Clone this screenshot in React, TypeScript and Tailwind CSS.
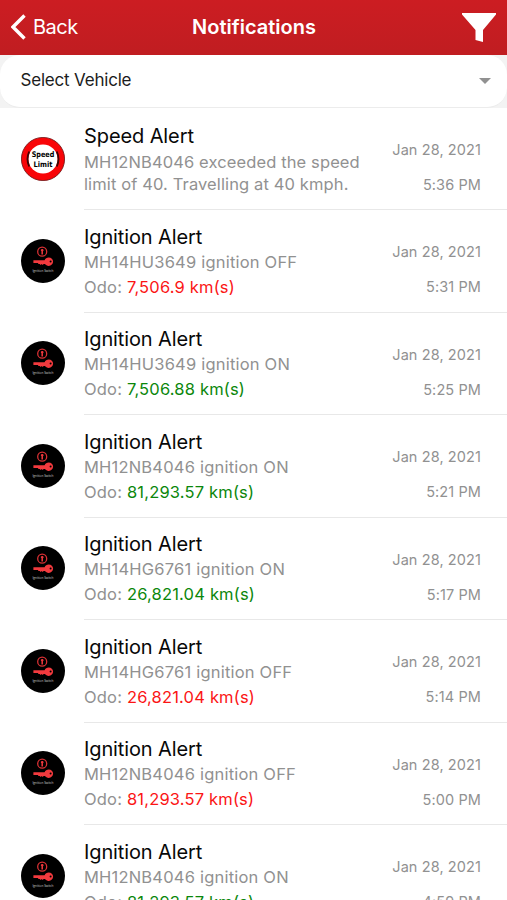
type Notification = {
  title: string
  vehicle: string
  state: 'ON' | 'OFF'
  odo: string
  date: string
  time: string
}

const ignitionAlerts: Notification[] = [
  { title: 'Ignition Alert', vehicle: 'MH14HU3649', state: 'OFF', odo: '7,506.9', date: 'Jan 28, 2021', time: '5:31 PM' },
  { title: 'Ignition Alert', vehicle: 'MH14HU3649', state: 'ON', odo: '7,506.88', date: 'Jan 28, 2021', time: '5:25 PM' },
  { title: 'Ignition Alert', vehicle: 'MH12NB4046', state: 'ON', odo: '81,293.57', date: 'Jan 28, 2021', time: '5:21 PM' },
  { title: 'Ignition Alert', vehicle: 'MH14HG6761', state: 'ON', odo: '26,821.04', date: 'Jan 28, 2021', time: '5:17 PM' },
  { title: 'Ignition Alert', vehicle: 'MH14HG6761', state: 'OFF', odo: '26,821.04', date: 'Jan 28, 2021', time: '5:14 PM' },
  { title: 'Ignition Alert', vehicle: 'MH12NB4046', state: 'OFF', odo: '81,293.57', date: 'Jan 28, 2021', time: '5:00 PM' },
  { title: 'Ignition Alert', vehicle: 'MH12NB4046', state: 'ON', odo: '81,293.57', date: 'Jan 28, 2021', time: '4:59 PM' },
]

function SpeedIcon() {
  return (
    <svg viewBox="0 0 44 44" className="h-11 w-11">
      <circle cx="22" cy="22" r="21.6" fill="#f80508" stroke="#6b1010" strokeWidth="0.8" />
      <circle cx="22" cy="22" r="14.6" fill="#fff" />
      <path d="M8.2 14.5q-3.4 7.5 0 15M35.8 14.5q3.4 7.5 0 15" fill="none" stroke="#3d0505" strokeWidth="1.8" />
      <text x="22" y="19.8" textAnchor="middle" textLength="22.5" lengthAdjust="spacingAndGlyphs" fontSize="7.8" fontWeight="700" fontFamily="DejaVu Sans, sans-serif">Speed</text>
      <text x="22" y="29.8" textAnchor="middle" textLength="19" lengthAdjust="spacingAndGlyphs" fontSize="7.6" fontWeight="700" fontFamily="DejaVu Sans, sans-serif">Limit</text>
    </svg>
  )
}

function IgnitionIcon() {
  return (
    <svg viewBox="0 0 44 44" className="h-11 w-11">
      <circle cx="22" cy="22" r="22" fill="#000" />
      <circle cx="21.2" cy="12.7" r="4.5" fill="none" stroke="#d93034" strokeWidth="1.3" />
      <path d="M21.2 10v5.4M19.9 11.3h2.6" stroke="#e8363a" strokeWidth="1.6" />
      <path
        fillRule="evenodd"
        fill="#f23a3e"
        d="M12.4 21.2h11.2c.7-1.8 2.3-2.8 4.1-2.8 2.5 0 4.4 1.8 4.4 4.2s-1.9 4.3-4.4 4.3c-1.6 0-2.9-.7-3.7-1.8h-1.4l-.9.8-1-.8-1 .8-.9-.8h-1.6v-1h-4.8zM29.6 21.6a1 1 0 1 0 0 2 1 1 0 0 0 0-2z"
      />
      <text x="22" y="33" textAnchor="middle" textLength="21" lengthAdjust="spacingAndGlyphs" fontSize="3.6" fill="#cfcfcf" fontFamily="Open Sans, sans-serif">Ignition Switch</text>
    </svg>
  )
}

function Stamp({ date, time }: { date: string; time: string }) {
  return (
    <div className="shrink-0 pt-[24px] pr-[26px] text-right text-[14.5px] leading-[35px] tracking-[0.1px] whitespace-nowrap text-[#919191]">
      <div>{date}</div>
      <div>{time}</div>
    </div>
  )
}

function IgnitionRow({ item }: { item: Notification }) {
  return (
    <li className="flex h-[102.5px] pl-[20.5px]">
      <div className="w-[63.5px] shrink-0 pt-[28.5px]">
        <IgnitionIcon />
      </div>
      <div className="flex flex-1 justify-between border-b border-[#e8e8e8]">
        <div className="pt-[13.4px] whitespace-nowrap">
          <h2 className="text-[20px] leading-[26px] tracking-[-0.12px] text-[#080808]">{item.title}</h2>
          <p className="text-[16.5px] leading-[25px] tracking-[0.2px] text-[#919191]">
            {item.vehicle} ignition {item.state}
          </p>
          <p className="text-[16.5px] leading-[24.5px] tracking-[0.18px] text-[#919191]">
            Odo: <span className={item.state === 'ON' ? 'text-[#0b870b]' : 'text-[#fb1515]'}>{item.odo} km(s)</span>
          </p>
        </div>
        <Stamp date={item.date} time={item.time} />
      </div>
    </li>
  )
}

export default function App() {
  return (
    <div className="h-[900px] w-[507px] overflow-hidden bg-white font-['Inter',sans-serif]">
      <header className="flex h-[54.5px] items-center justify-between bg-linear-to-b from-[#cc1d22] to-[#c01d21] pr-[11px] pl-[11px] text-white">
        <button className="flex w-[90px] items-center gap-[7px] text-[20px] tracking-[-0.5px]">
          <svg viewBox="0 0 15 26" className="h-[26px] w-[15px]">
            <path d="M13.5 1.5 2 13l11.5 11.5" fill="none" stroke="#fff" strokeWidth="3.4" />
          </svg>
          Back
        </button>
        <h1 className="pl-px text-[20px] font-semibold">Notifications</h1>
        <button className="flex w-[90px] justify-end">
          <svg viewBox="0 0 34 29" className="h-[29px] w-[34px]">
            <path d="M0 0h34v1.5L21 17v12l-7.5-2V17L0 1.5z" fill="#fff" />
          </svg>
        </button>
      </header>
      <div className="h-[53.5px] bg-[#f3f3f3]">
        <div className="flex h-[53.5px] items-center justify-between rounded-[20px] border-b border-[#ececec] bg-white pr-4 pl-[20.5px]">
          <span className="pb-px text-[17px] tracking-[-0.2px] text-[#1c1c1c]">Select Vehicle</span>
          <svg viewBox="0 0 12 6" className="h-1.5 w-3">
            <path d="M0 0h12L6 6z" fill="#919191" />
          </svg>
        </div>
      </div>
      <ul>
        <li className="flex h-[102.4px] pl-[20.5px]">
          <div className="w-[63.5px] shrink-0 pt-[29px]">
            <SpeedIcon />
          </div>
          <div className="flex flex-1 justify-between border-b border-[#e8e8e8]">
            <div className="pt-[15px] whitespace-nowrap">
              <h2 className="pb-[1.5px] text-[20px] leading-[26px] tracking-[-0.1px] text-[#080808]">Speed Alert</h2>
              <p className="text-[16.5px] leading-[22px] tracking-[0.12px] text-[#919191]">
                MH12NB4046 exceeded the speed
                <br />
                limit of 40. Travelling at 40 kmph.
              </p>
            </div>
            <Stamp date="Jan 28, 2021" time="5:36 PM" />
          </div>
        </li>
        {ignitionAlerts.map((item) => (
          <IgnitionRow key={item.time} item={item} />
        ))}
      </ul>
    </div>
  )
}
